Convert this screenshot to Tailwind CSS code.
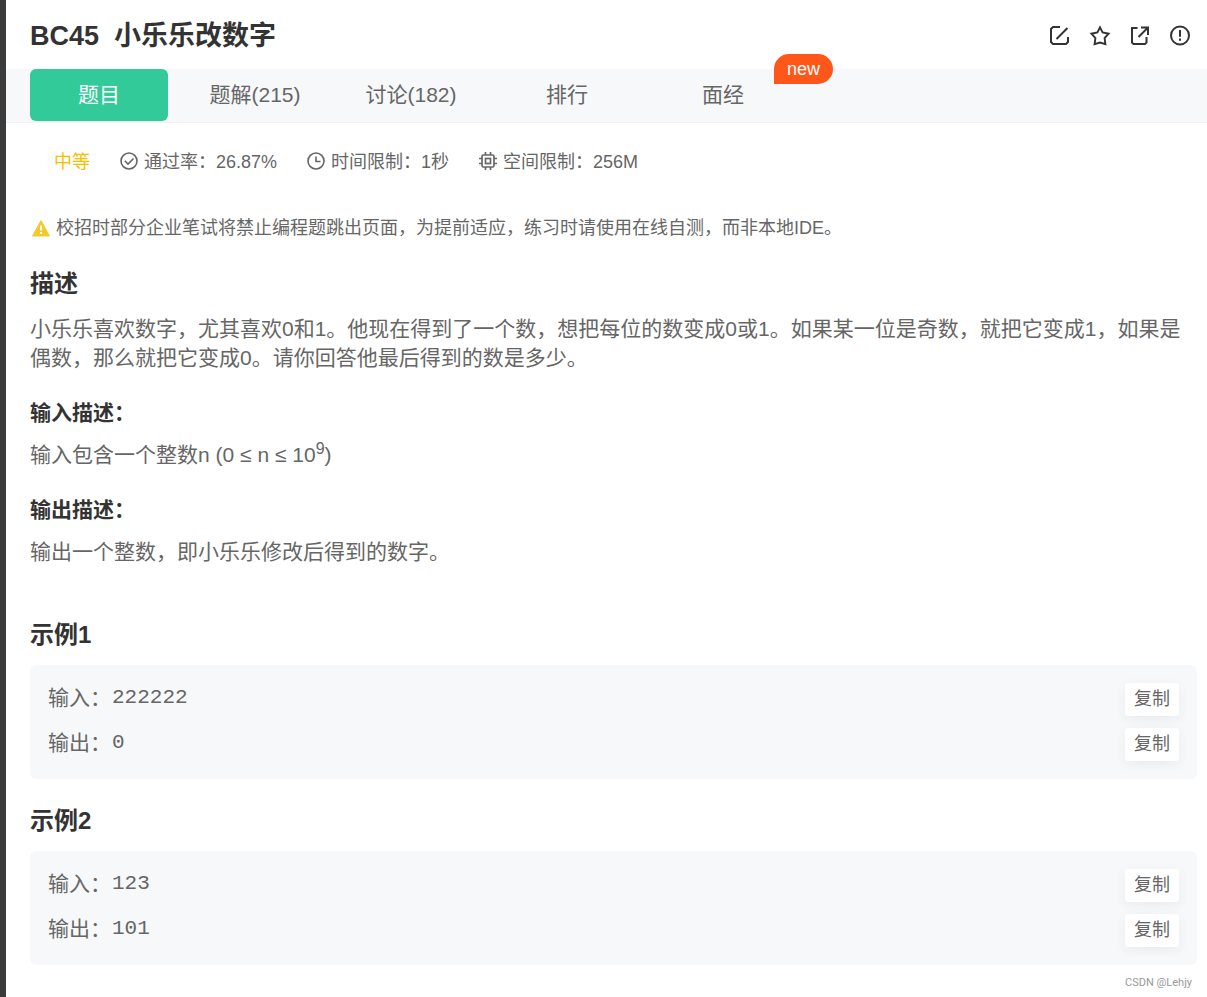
<!DOCTYPE html>
<html lang="zh-CN">
<head>
<meta charset="utf-8">
<meta name="viewport" content="width=device-width, initial-scale=1">
<title>BC45 小乐乐改数字</title>
<script src="https://cdn.jsdelivr.net/npm/@tailwindcss/browser@4"></script>
</head>
<body class="min-h-screen border-l-6 border-[#3b3b3b] bg-white font-['Liberation_Sans','Noto_Sans_CJK_SC',sans-serif] text-[21px] leading-[29px] text-[#666]">
<header class="flex h-[69px] items-center justify-between pt-[2px] pr-4 pl-6 text-[#333]">
  <h1 class="text-[27px] leading-9 font-bold whitespace-pre">BC45  小乐乐改数字</h1>
  <div class="flex gap-[18px]">
    <button type="button" aria-label="编辑" class="size-[22px]"><svg class="size-[22px]" viewBox="0 0 22 22" fill="none" stroke="currentColor" stroke-width="2"><path d="M11 2H4L2 4v13l2 2h13l2-2v-5M7.500 14 18.500 3"/></svg></button>
    <button type="button" aria-label="收藏" class="size-[22px]"><svg class="size-[22px]" viewBox="0 0 22 22" fill="none" stroke="currentColor" stroke-width="1.900" stroke-linejoin="miter"><path d="m11 2.300 2.600 5.200 6 1.200-4 4.300.8 6.200-5.400-1.700-5.400 1.700.8-6.200-4-4.300 6-1.200z"/></svg></button>
    <button type="button" aria-label="分享" class="size-[22px]"><svg class="size-[22px]" viewBox="0 0 22 22" fill="none" stroke="currentColor" stroke-width="2"><path d="M8.500 3H3v14.500L4.500 19H16l1.500-1.500V12M12 2.500h7V10M18.500 3 9.500 12"/></svg></button>
    <button type="button" aria-label="反馈" class="size-[22px]"><svg class="size-[22px]" viewBox="0 0 22 22" fill="none" stroke="currentColor" stroke-width="2"><circle cx="11" cy="10.500" r="9"/><path d="M11 5v6.800M11 13.500v2.300"/></svg></button>
  </div>
</header>
<nav class="flex gap-[18px] border-b border-[#f0f1f2] bg-[#f7f8fa] pb-px pl-6">
  <a href="#" class="flex h-[52px] w-[138px] items-center justify-center rounded-md bg-[#32ca99] pb-[2px] text-white">题目</a>
  <a href="#" class="flex h-[52px] w-[138px] items-center justify-center pb-[2px]">题解(215)</a>
  <a href="#" class="flex h-[52px] w-[138px] items-center justify-center pb-[2px]">讨论(182)</a>
  <a href="#" class="flex h-[52px] w-[138px] items-center justify-center pb-[2px]">排行</a>
  <a href="#" class="relative flex h-[52px] w-[138px] items-center justify-center pb-[2px]">面经<span class="absolute -top-[15px] left-[120px] flex h-[30px] w-[59px] items-center justify-center rounded-full rounded-bl-none bg-[#ff571a] text-[18px] text-white">new</span></a>
</nav>
<main class="pr-[10px] pl-6">
  <div class="mt-[26px] flex items-center gap-[30px] pl-6 text-[18px] leading-[27px]">
    <span class="text-[#f5c000]">中等</span>
    <span class="flex items-center gap-[6px]"><svg class="mb-1 size-[18px]" viewBox="0 0 18 18" fill="none" stroke="currentColor" stroke-width="1.600"><circle cx="9" cy="9" r="8"/><path d="m4.800 8.800 3.200 3.200 5.500-5.500"/></svg>通过率：26.87%</span>
    <span class="flex items-center gap-[6px]"><svg class="mb-1 size-[18px]" viewBox="0 0 18 18" fill="none" stroke="currentColor" stroke-width="1.600"><circle cx="9" cy="9" r="8"/><path d="M9 4.500v5h4.500"/></svg>时间限制：1秒</span>
    <span class="flex items-center gap-[6px]"><svg class="mb-1 size-[18px]" viewBox="0 0 18 18" fill="none" stroke="currentColor" stroke-width="1.700"><rect x="3" y="3" width="12" height="12" rx="1.500"/><rect x="6.500" y="6.500" width="5" height="5"/><path d="M6.500 0v3M11.500 0v3M6.500 15v3M11.500 15v3M0 6.500h3M0 11.500h3M15 6.500h3M15 11.500h3"/></svg>空间限制：256M</span>
  </div>
  <p class="mt-[39px] flex items-center gap-[6px] pl-[2px] text-[18px] leading-[27px]"><svg class="mb-[2px] size-[18px]" viewBox="0 0 18 18"><path d="M9 1.500 17.500 17H.5z" fill="#f2c92f" stroke="#f2c92f" stroke-linejoin="round"/><path d="M9 6.500v5M9 13v2" stroke="#fff" stroke-width="1.800"/></svg>校招时部分企业笔试将禁止编程题跳出页面，为提前适应，练习时请使用在线自测，而非本地IDE。</p>
  <h2 class="mt-6 text-[24px] leading-9 font-bold text-[#333]">描述</h2>
  <p class="mt-3">小乐乐喜欢数字，尤其喜欢0和1。他现在得到了一个数，想把每位的数变成0或1。如果某一位是奇数，就把它变成1，如果是偶数，那么就把它变成0。请你回答他最后得到的数是多少。</p>
  <h3 class="mt-[26px] leading-[30px] font-bold text-[#333]">输入描述：</h3>
  <p class="mt-3">输入包含一个整数n (0 ≤ n ≤ 10<sup class="text-[16px]">9</sup>)</p>
  <h3 class="mt-[26px] leading-[30px] font-bold text-[#333]">输出描述：</h3>
  <p class="mt-3">输出一个整数，即小乐乐修改后得到的数字。</p>
  <h2 class="mt-[51px] text-[24px] leading-9 font-bold text-[#333]">示例1</h2>
  <section class="mt-3 flex flex-col gap-3 rounded-md bg-[#f7f8fa] p-[18px]">
    <div class="flex h-[33px]"><span class="w-16">输入：</span><code class="font-['Liberation_Mono',monospace]">222222</code><button type="button" class="ml-auto h-[33px] w-[54px] rounded-[3px] bg-white text-[18px] shadow-[0_3px_12px_rgba(0,0,0,0.06)]">复制</button></div>
    <div class="flex h-[33px]"><span class="w-16">输出：</span><code class="font-['Liberation_Mono',monospace]">0</code><button type="button" class="ml-auto h-[33px] w-[54px] rounded-[3px] bg-white text-[18px] shadow-[0_3px_12px_rgba(0,0,0,0.06)]">复制</button></div>
  </section>
  <h2 class="mt-6 text-[24px] leading-9 font-bold text-[#333]">示例2</h2>
  <section class="mt-3 flex flex-col gap-3 rounded-md bg-[#f7f8fa] p-[18px]">
    <div class="flex h-[33px]"><span class="w-16">输入：</span><code class="font-['Liberation_Mono',monospace]">123</code><button type="button" class="ml-auto h-[33px] w-[54px] rounded-[3px] bg-white text-[18px] shadow-[0_3px_12px_rgba(0,0,0,0.06)]">复制</button></div>
    <div class="flex h-[33px]"><span class="w-16">输出：</span><code class="font-['Liberation_Mono',monospace]">101</code><button type="button" class="ml-auto h-[33px] w-[54px] rounded-[3px] bg-white text-[18px] shadow-[0_3px_12px_rgba(0,0,0,0.06)]">复制</button></div>
  </section>
</main>
<footer class="pt-[10px] pr-[15px] text-right font-['Roboto',sans-serif] text-[11px] leading-4 text-[#999]">CSDN @Lehjy</footer>
</body>
</html>
